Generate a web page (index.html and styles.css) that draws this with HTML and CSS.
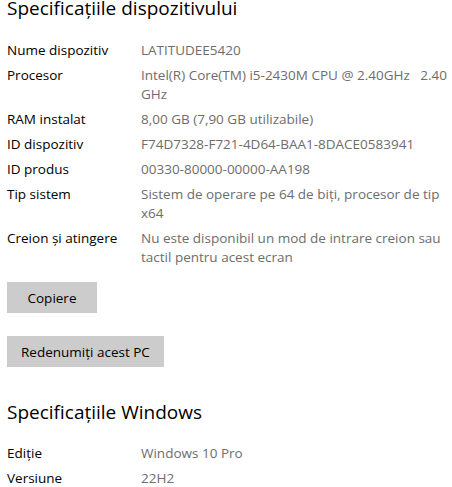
FILE: index.html
```html
<!DOCTYPE html>
<html lang="ro">
<head>
<meta charset="utf-8">
<title>Despre</title>
<link rel="stylesheet" href="styles.css">
</head>
<body>
<main class="page">
  <section class="section">
    <h2 class="heading">Specificațiile dispozitivului</h2>
    <dl class="specs">
      <dt>Nume dispozitiv</dt><dd>LATITUDEE5420</dd>
      <dt>Procesor</dt><dd><span class="nowrap">Intel(R) Core(TM) i5-2430M CPU @ 2.40GHz&nbsp;&nbsp;&nbsp;2.40</span><br>GHz</dd>
      <dt>RAM instalat</dt><dd>8,00 GB (7,90 GB utilizabile)</dd>
      <dt>ID dispozitiv</dt><dd>F74D7328-F721-4D64-BAA1-8DACE0583941</dd>
      <dt>ID produs</dt><dd>00330-80000-00000-AA198</dd>
      <dt>Tip sistem</dt><dd>Sistem de operare pe 64 de biți, procesor de tip x64</dd>
      <dt>Creion și atingere</dt><dd>Nu este disponibil un mod de intrare creion sau tactil pentru acest ecran</dd>
    </dl>
    <div class="actions">
      <button class="btn" type="button">Copiere</button>
      <button class="btn" type="button">Redenumiți acest PC</button>
    </div>
  </section>
  <section class="section">
    <h2 class="heading">Specificațiile Windows</h2>
    <dl class="specs">
      <dt>Ediție</dt><dd>Windows 10 Pro</dd>
      <dt>Versiune</dt><dd>22H2</dd>
    </dl>
  </section>
</main>
</body>
</html>
```

FILE: styles.css
```css
html, body {
  margin: 0;
  padding: 0;
  background: #ffffff;
}
body {
  font-family: "Open Sans", "Noto Sans", "Liberation Sans", sans-serif;
  color: #000;
  overflow: hidden;
}
.page {
  padding: 0 0 0 7px;
  width: 452px;
  box-sizing: border-box;
  margin-top: -6px;
}
.heading {
  margin: 0;
  font-size: 19px;
  line-height: 28px;
  font-weight: 400;
  color: #000;
}
.specs {
  margin: 19px 0 0 0;
  display: grid;
  grid-template-columns: 134px 1fr;
  row-gap: 6px;
  font-size: 13.5px;
  line-height: 19px;
}
.specs dt {
  margin: 0;
  color: #000;
}
.specs dd {
  margin: 0;
  color: #6d6d6d;
}
.nowrap {
  white-space: nowrap;
}
.actions {
  margin-top: 15px;
  display: flex;
  flex-direction: column;
  align-items: flex-start;
  gap: 23px;
}
.btn {
  min-width: 90px;
  height: 31px;
  padding: 0 14px;
  border: 0;
  background: #cccccc;
  font-family: inherit;
  font-size: 13.5px;
  color: #000;
}
.section + .section {
  margin-top: 31px;
}
.section + .section .specs {
  margin-top: 18px;
}
```
